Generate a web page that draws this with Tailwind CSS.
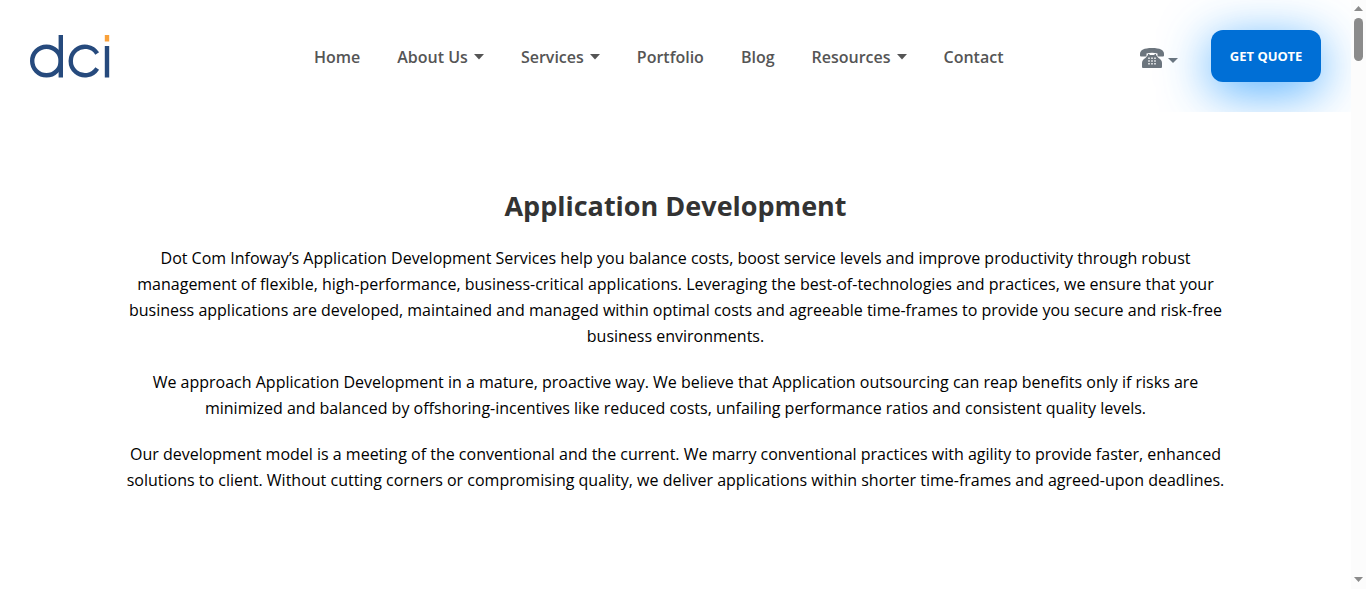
<!DOCTYPE html>
<html lang="en">
<head>
<meta charset="utf-8">
<meta name="viewport" content="width=device-width, initial-scale=1">
<title>Application Development</title>
<script src="https://cdn.jsdelivr.net/npm/@tailwindcss/browser@4"></script>
</head>
<body class="flex h-screen overflow-hidden bg-white font-['Open_Sans',sans-serif] text-base text-black">
<div class="min-w-0 flex-1">
  <header class="flex h-28 items-center justify-between overflow-hidden px-[30px]">
    <a href="#" aria-label="dci" class="w-[284px]">
      <svg class="mt-px block h-11 w-20" viewBox="0 0 80 44" fill="none" stroke="#264a7d" stroke-width="4.400">
        <circle cx="16.500" cy="26" r="14.300"/>
        <path d="M30.800 0V42.500M77 11V42.500"/>
        <path d="M67.200 18.500A14.300 14.300 0 1 0 67.200 33.500"/>
        <path d="M77 0V6.500" stroke="#f9a13a"/>
      </svg>
    </a>
    <nav class="flex flex-1 items-center gap-[37px] pt-0.5 font-semibold text-[#555]">
      <a href="#">Home</a>
      <a href="#" class="flex items-center gap-1.5 whitespace-nowrap">About Us<svg class="h-1.5 w-2.5" viewBox="0 0 10 6"><path d="M0 0H10L5 5.500Z" fill="currentColor"/></svg></a>
      <a href="#" class="flex items-center gap-1.5">Services<svg class="h-1.5 w-2.5" viewBox="0 0 10 6"><path d="M0 0H10L5 5.500Z" fill="currentColor"/></svg></a>
      <a href="#">Portfolio</a>
      <a href="#">Blog</a>
      <a href="#" class="flex items-center gap-1.5">Resources<svg class="h-1.5 w-2.5" viewBox="0 0 10 6"><path d="M0 0H10L5 5.500Z" fill="currentColor"/></svg></a>
      <a href="#">Contact</a>
    </nav>
    <button type="button" aria-label="Phone numbers" class="mr-[33px] flex items-center gap-1 pt-1 text-[#6c757d]">
      <svg class="h-5 w-6" viewBox="0 0 24 20">
        <path d="M0 6C0 2 4 0 12 0S24 2 24 6V7.500Q24 8.500 23 8.500H18.500Q17.500 8.500 17.500 7.500V5.500Q12 3.800 6.500 5.500V7.500Q6.500 8.500 5.500 8.500H1Q0 8.500 0 7.500Z" fill="currentColor"/>
        <path d="M8 6H9.500V7H14.500V6H16V7Q17 8 18.500 10Q22 12 22 15V19Q22 20 21 20H3Q2 20 2 19V15Q2 12 5.500 10Q7 8 8 7Z" fill="currentColor"/>
        <path d="M8 9.500h2v1.500H8zM11 9.500h2v1.500h-2zM14 9.500h2v1.500h-2zM8 12.200h2v1.500H8zM11 12.200h2v1.500h-2zM14 12.200h2v1.500h-2zM8 14.900h2v1.500H8zM11 14.900h2v1.500h-2zM14 14.900h2v1.500h-2z" fill="#d5d8da"/>
      </svg>
      <svg class="mt-1 h-[5px] w-2.5" viewBox="0 0 10 5"><path d="M0 0H10L5 5Z" fill="currentColor"/></svg>
    </button>
    <button type="button" class="h-[52px] w-[110px] rounded-xl bg-[#006fd6] pt-0.5 font-['Noto_Sans',sans-serif] text-[13px] font-bold whitespace-nowrap text-white shadow-[0_10px_50px_#1e96ffc8]">GET QUOTE</button>
  </header>
  <main class="mx-auto max-w-[1110px] pt-[72px] text-center">
    <h1 class="text-[27px] leading-[44px] font-bold text-[#333]">Application Development</h1>
    <div class="mt-[17px] space-y-5 leading-[26px]">
      <p>Dot Com Infoway’s Application Development Services help you balance costs, boost service levels and improve productivity through robust management of flexible, high-performance, business-critical applications. Leveraging the best-of-technologies and practices, we ensure that your business applications are developed, maintained and managed within optimal costs and agreeable time-frames to provide you secure and risk-free business environments.</p>
      <p>We approach Application Development in a mature, proactive way. We believe that Application outsourcing can reap benefits only if risks are minimized and balanced by offshoring-incentives like reduced costs, unfailing performance ratios and consistent quality levels.</p>
      <p>Our development model is a meeting of the conventional and the current. We marry conventional practices with agility to provide faster, enhanced solutions to client. Without cutting corners or compromising quality, we deliver applications within shorter time-frames and agreed-upon deadlines.</p>
    </div>
  </main>
</div>
<div aria-hidden="true" class="flex w-[15px] flex-col items-center bg-[#fcfcfc] pt-1.5 pb-[7px] text-[#8b8b8b]">
  <svg class="h-[5px] w-[9px]" viewBox="0 0 9 5"><path d="M0 5L4.500 0L9 5Z" fill="currentColor"/></svg>
  <div class="mt-[7px] h-[43px] w-[9px] rounded-full bg-[#8b8b8b]"></div>
  <svg class="mt-auto h-[5px] w-[9px]" viewBox="0 0 9 5"><path d="M0 0H9L4.500 5Z" fill="currentColor"/></svg>
</div>
</body>
</html>
